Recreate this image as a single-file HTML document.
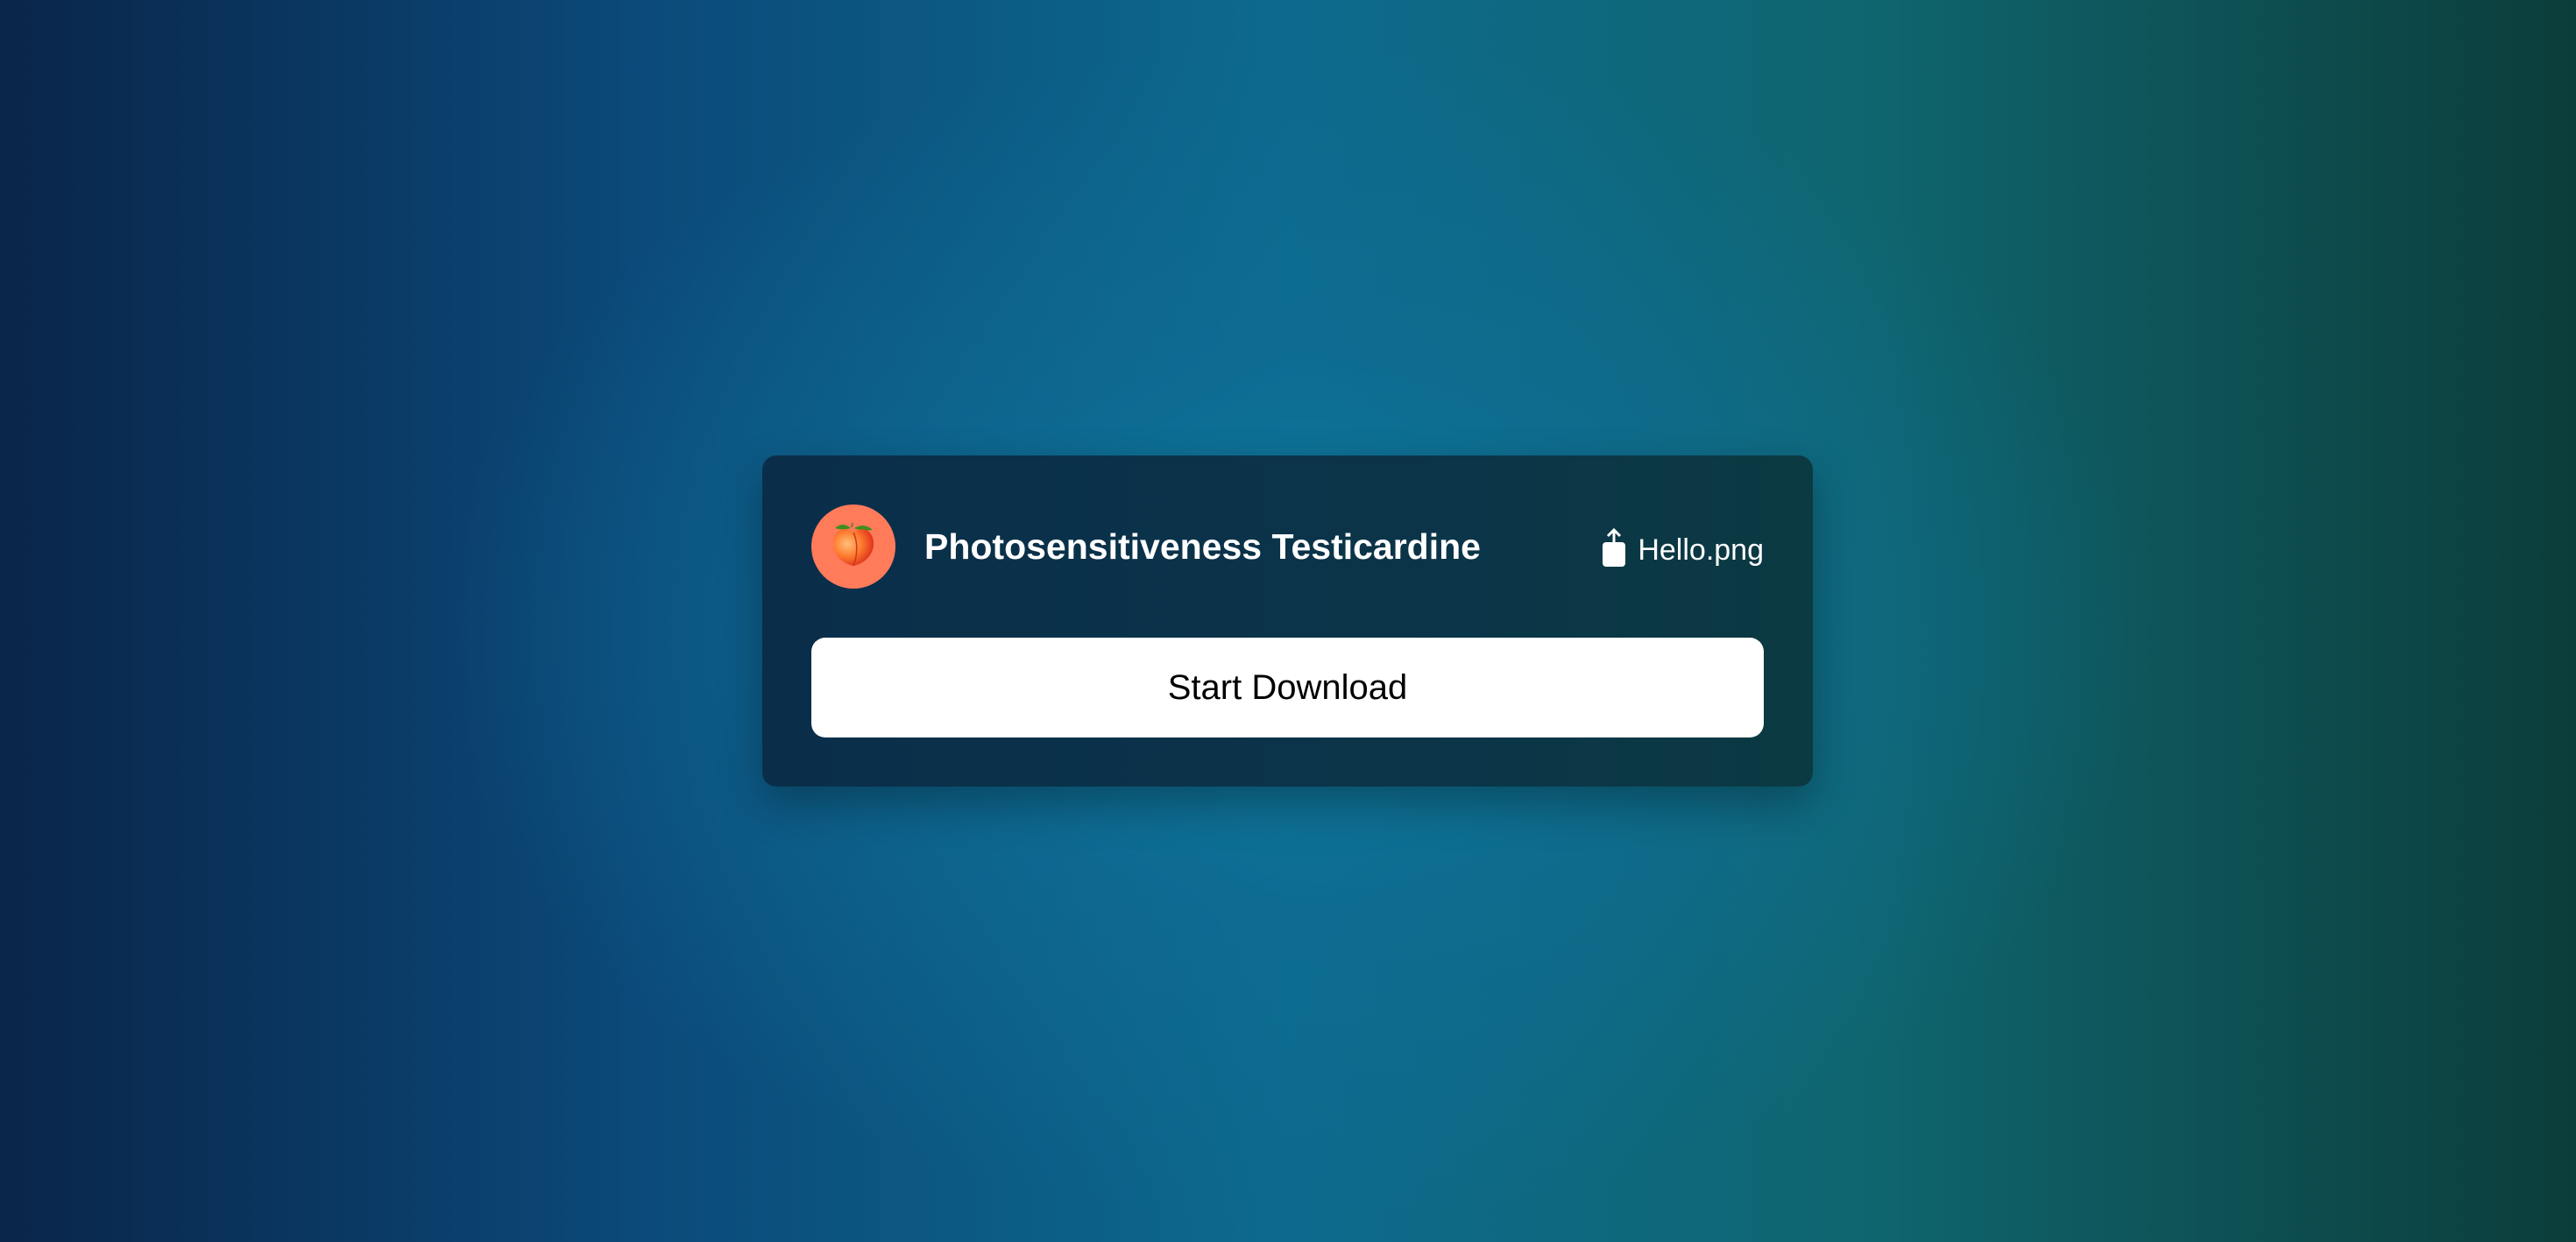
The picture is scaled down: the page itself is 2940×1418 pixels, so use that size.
<!DOCTYPE html>
<html><head><meta charset="utf-8"><style>
html,body{margin:0;padding:0;width:2940px;height:1418px;overflow:hidden}
body{position:relative;font-family:"Liberation Sans",sans-serif;
background:
radial-gradient(ellipse 1300px 900px at 1480px 720px, rgba(14,122,158,0.95) 0%, rgba(14,110,150,0.6) 35%, rgba(14,100,140,0) 75%),
linear-gradient(90deg,#0a2549 0%,#0b4a7a 25%,#0d6a8e 50%,#0f6670 72%,#0c3d3a 100%);}
.card{position:absolute;left:870px;top:520px;width:1199px;height:378px;border-radius:16px;
background:linear-gradient(90deg,#0a2e4a 0%,#0b3449 60%,#0b3a42 100%);
box-shadow:0 20px 50px rgba(0,0,0,0.3)}
.av{position:absolute;left:56px;top:56px;width:96px;height:96px;border-radius:50%;background:#ff7b5a}
.av svg{position:absolute;left:24px;top:18px}
.title{position:absolute;left:1055px;top:596px;color:#fff;font-weight:bold;font-size:41px;line-height:56px}
.file{position:absolute;right:56px;top:83px;color:#fff;font-size:34px;line-height:40px}
.btn{position:absolute;left:56px;top:208px;width:1087px;height:114px;border-radius:16px;background:#fff;
color:#000;font-size:40px;line-height:114px;text-align:center}
</style></head><body>
<div class="card">
 <div class="av"><svg width="48" height="56" viewBox="0 0 48 56">
  <defs><radialGradient id="g" cx="35%" cy="40%" r="70%"><stop offset="0" stop-color="#ffc07a"/><stop offset="0.5" stop-color="#ff7a2e"/><stop offset="1" stop-color="#d8281a"/></radialGradient></defs>
  <path d="M22 8 L23 3" stroke="#8a6a50" stroke-width="2"/>
  <path d="M3 9 Q12 1 21 9 Q12 12 3 9Z" fill="#3f8f1e"/>
  <path d="M25 9 Q36 2 46 11 Q34 13 25 9Z" fill="#3f8f1e"/>
  <path d="M24 14 C10 4 0 16 1 28 C2 42 14 50 24 52 C34 50 46 42 47 28 C48 16 38 4 24 14Z" fill="url(#g)"/>
  <path d="M24 14 C29 24 29 40 24 52" stroke="#c83a18" stroke-width="1.5" fill="none"/>
 </svg></div>
 <div class="file"><svg width="26" height="44" viewBox="0 0 26 44" style="vertical-align:-8px;margin-right:14px">
  <rect x="0" y="16" width="26" height="28" rx="4" fill="#fff"/>
  <path d="M13 32 V3 M6 9 L13 2 L20 9" stroke="#fff" stroke-width="3" fill="none"/>
 </svg>Hello.png</div>
 <div class="btn">Start Download</div>
</div>
<div class="title">Photosensitiveness Testicardine</div>
</body></html>
